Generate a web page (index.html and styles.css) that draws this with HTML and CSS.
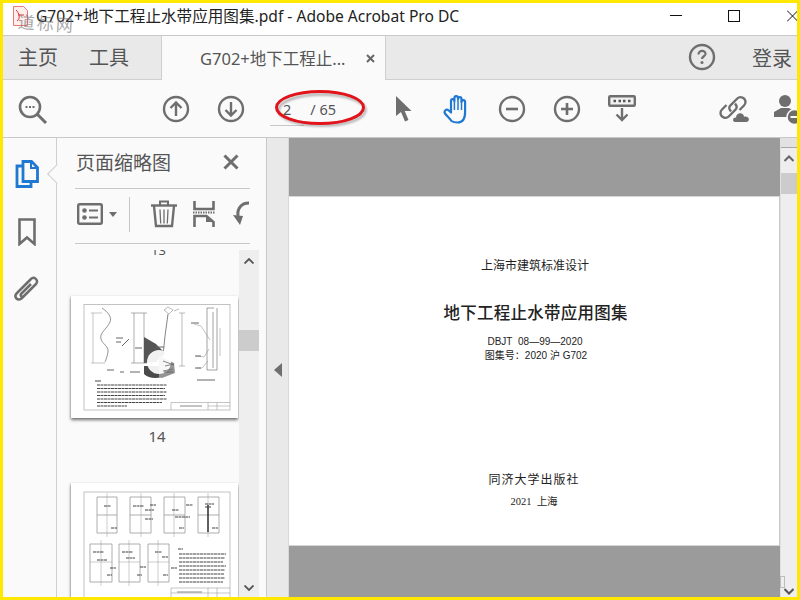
FILE: index.html
```html
<!DOCTYPE html>
<html lang="zh">
<head>
<meta charset="utf-8">
<title>G702 - Adobe Acrobat Pro DC</title>
<link rel="stylesheet" href="styles.css">
</head>
<body>
<div class="window">
  <header class="titlebar">
    <span class="title">G702+地下工程止水带应用图集.pdf - Adobe Acrobat Pro DC</span>
    <svg class="win-min" width="12" height="1" viewBox="0 0 12 1"><path d="M0 .5h12" stroke="#111"/></svg>
    <svg class="win-max" width="12" height="12" viewBox="0 0 12 12"><rect x=".5" y=".5" width="11" height="11" fill="none" stroke="#111"/></svg>
    <svg class="win-close" width="10" height="12" viewBox="0 0 10 12"><path d="M0 .5l11 11M11 .5L0 11.500" stroke="#111" fill="none"/></svg>
  </header>

  <nav class="tabs">
    <span class="tab-link">主页</span>
    <span class="tab-link tab-tools">工具</span>
    <div class="doc-tab">
      <span class="doc-tab-name">G702+地下工程止...</span>
      <svg width="9" height="9" viewBox="0 0 9 9"><path d="M1 1l7 7M8 1L1 8" stroke="#666" stroke-width="2"/></svg>
    </div>
    <svg class="help" width="28" height="28" viewBox="0 0 28 28"><circle cx="14" cy="14" r="12" fill="none" stroke="#6e6e6e" stroke-width="2.400"/><path d="M10.500 11.500c0-5 7.500-4.500 7-.3-.3 2-3.500 2.300-3.500 4.800" fill="none" stroke="#6e6e6e" stroke-width="2.200"/><circle cx="14" cy="19.500" r="1.500" fill="#6e6e6e"/></svg>
    <span class="login">登录</span>
  </nav>

  <div class="toolbar">
    <svg class="tool tool-search" width="30" height="30" viewBox="0 0 30 30"><circle cx="12" cy="12" r="10" fill="none" stroke="#6e6e6e" stroke-width="2.600"/><path d="M19 19l9 9" stroke="#6e6e6e" stroke-width="3"/><path d="M7.500 12h2M11 12h2M14.500 12h2" stroke="#6e6e6e" stroke-width="2"/></svg>
    <svg class="tool tool-up" width="28" height="28" viewBox="0 0 28 28"><circle cx="14" cy="14" r="12" fill="none" stroke="#6e6e6e" stroke-width="2.400"/><path d="M14 21V8M8.500 13L14 7.500l5.500 5.500" fill="none" stroke="#6e6e6e" stroke-width="2.400"/></svg>
    <svg class="tool tool-next" width="28" height="28" viewBox="0 0 28 28"><circle cx="14" cy="14" r="12" fill="none" stroke="#6e6e6e" stroke-width="2.400"/><path d="M14 7v13M8.500 15l5.500 5.500 5.500-5.500" fill="none" stroke="#6e6e6e" stroke-width="2.400"/></svg>
    <div class="pager">
      <span class="page-input">2</span>
      <span class="page-total">/ 65</span>
    </div>
    <span class="tool-sep"></span>
    <svg class="tool tool-arrow" width="16" height="26" viewBox="0 0 16 26"><path d="M0 0v20l5-4 4 9.500 3.500-1.500-3.800-9H15.500z" fill="#6e6e6e"/></svg>
    <svg class="tool tool-hand" width="28" height="30" viewBox="0 0 28 30"><path d="M8.500 27C6.500 24 3.500 21.500 2 19.500c-1.500-2.500 1.500-5 3.500-3.200L8 18.500V7c0-2.400 3.400-2.400 3.400 0V4c0-2.600 3.600-2.600 3.600 0v1c0-2.400 3.500-2.400 3.500 0v3c0-2.400 3.600-2.400 3.600 0v10c0 5-1.500 10.500-7.500 10.500-3 0-4.600-.300-6.100-1.500z" fill="none" stroke="#1f78d1" stroke-width="2.200" stroke-linejoin="round"/><path d="M11.400 7v9M15 5v11M18.500 6v10" stroke="#1f78d1" stroke-width="1.500"/></svg>
    <svg class="tool tool-minus" width="28" height="28" viewBox="0 0 28 28"><circle cx="14" cy="14" r="12" fill="none" stroke="#6e6e6e" stroke-width="2.400"/><path d="M8 14h12" stroke="#6e6e6e" stroke-width="2.600"/></svg>
    <svg class="tool tool-plus" width="28" height="28" viewBox="0 0 28 28"><circle cx="14" cy="14" r="12" fill="none" stroke="#6e6e6e" stroke-width="2.400"/><path d="M8 14h12M14 8v12" stroke="#6e6e6e" stroke-width="2.600"/></svg>
    <svg class="tool tool-fit" width="28" height="27" viewBox="0 0 28 27"><rect x="1.200" y="1.200" width="25.600" height="9.600" rx="1" fill="#f1f1f1" stroke="#6e6e6e" stroke-width="2.400"/><path d="M5.500 6h2.500M10.500 6H13M15 6h2.500M20 6h2.500" stroke="#555" stroke-width="2.400"/><path d="M14 13v12M8.500 19.500L14 25l5.500-5.500" fill="none" stroke="#6e6e6e" stroke-width="2.400"/></svg>
    <svg class="tool tool-link" width="32" height="28" viewBox="0 0 32 28"><path d="M12 16.500l-1-1.500c-1-1.500-.6-3.500.5-4.600l6.800-6.900c3-3 8.200-.5 8.200 3.500 0 1.500-.6 2.600-1.500 3.500l-4.500 4.500" fill="none" stroke="#6e6e6e" stroke-width="2.300"/><path d="M16 8.500l1 1.500c1 1.500.6 3.500-.5 4.600l-6.800 6.900c-3 3-8.200.5-8.200-3.500 0-1.500.6-2.600 1.500-3.500l4.500-4.500" fill="none" stroke="#6e6e6e" stroke-width="2.300"/><path d="M16 27.500c-3.500 0-3.500-5.500.5-5.500.5-5 7.500-6 9-1 3-.5 5 1.500 5 3.500 0 2-1.500 3-3 3z" fill="#6e6e6e" stroke="#fafafa" stroke-width="1.200"/></svg>
    <svg class="tool tool-user" width="24" height="30" viewBox="0 0 24 30"><circle cx="11" cy="7" r="6" fill="#6e6e6e"/><path d="M0 23v-5l7-4h8l5 3v6z" fill="#6e6e6e"/><circle cx="20.500" cy="23" r="7.500" fill="#6e6e6e" stroke="#fafafa" stroke-width="1.500"/><path d="M16.500 23h8" stroke="#fafafa" stroke-width="2"/></svg>
  </div>

  <main class="workspace">
    <aside class="rail">
      <span class="rail-notch"></span>
      <svg width="24" height="28" viewBox="0 0 24 28"><path d="M8 6H2v20.500h14V22" fill="none" stroke="#1f78d1" stroke-width="2.800"/><path d="M8 1.500h8.500l6 6V21.500H8z" fill="#fafafa" stroke="#1f78d1" stroke-width="2.800"/><path d="M16 2v6h6" fill="none" stroke="#1f78d1" stroke-width="2"/></svg>
      <svg width="18" height="28" viewBox="0 0 18 28"><path d="M1.500 1.500h15v24.500L9 19.500 1.500 26z" fill="none" stroke="#6e6e6e" stroke-width="2.600"/></svg>
      <svg width="26" height="27" viewBox="0 0 26 27"><path d="M22 8L8 22c-4 4-9-1-5-5L17 3c3-3 8 1 5 5L10 20c-2 2-4.500-.5-2.500-2.500L17 8" fill="none" stroke="#6e6e6e" stroke-width="2.500"/></svg>
    </aside>

    <section class="panel">
      <div class="panel-head">
        <span class="panel-title">页面缩略图</span>
        <svg width="16" height="16" viewBox="0 0 16 16"><path d="M1.500 1.500l13 13M14.500 1.500l-13 13" stroke="#6e6e6e" stroke-width="3"/></svg>
      </div>
      <div class="panel-tools">
        <svg width="26" height="22" viewBox="0 0 26 22"><rect x="1.200" y="1.200" width="23.600" height="19.600" rx="1.500" fill="none" stroke="#6e6e6e" stroke-width="2.400"/><circle cx="7.500" cy="7.500" r="2.300" fill="#6e6e6e"/><circle cx="7.500" cy="14.500" r="2.300" fill="#6e6e6e"/><path d="M12 7.500h9M12 14.500h9" stroke="#6e6e6e" stroke-width="2"/></svg>
        <svg class="caret" width="8" height="5" viewBox="0 0 8 5"><path d="M0 0h8L4 5z" fill="#6e6e6e"/></svg>
        <span class="panel-sep"></span>
        <svg class="trash" width="26" height="28" viewBox="0 0 26 28"><path d="M0 5.500h26" stroke="#6e6e6e" stroke-width="2.400"/><path d="M9 5V1.500h8V5" fill="none" stroke="#6e6e6e" stroke-width="2"/><path d="M3 6l2 20h16l2-20" fill="none" stroke="#6e6e6e" stroke-width="2.400"/><path d="M9 9.500l.7 14M13 9.500v14M17 9.500l-.7 14" stroke="#6e6e6e" stroke-width="1.300"/></svg>
        <svg class="extract" width="22" height="26" viewBox="0 0 22 26"><path d="M1.500 0v8h19V0" fill="none" stroke="#6e6e6e" stroke-width="2.600"/><path d="M0 11.500h22" stroke="#6e6e6e" stroke-width="2" stroke-dasharray="1.500 1"/><path d="M1.500 26V15h12l7 6v5" fill="none" stroke="#6e6e6e" stroke-width="2.600"/><path d="M13 15v6h7z" fill="#6e6e6e"/></svg>
        <svg class="rotate" width="17" height="26" viewBox="0 0 17 26"><path d="M16 2C8 2 4 8 5 15" fill="none" stroke="#6e6e6e" stroke-width="3"/><path d="M0 14l10 1-3 9z" fill="#6e6e6e"/></svg>
      </div>
      <div class="thumbs">
        <div class="thumb-list">
          <span class="thumb-cut">13</span>
          <figure class="thumb">
            <svg class="sheet" width="167" height="122" viewBox="0 0 167 122">
              <g class="sketch">
                <rect x="13" y="8.500" width="146" height="105.500" fill="none" stroke="#aaa" stroke-width=".7"/>
                <path d="M31 12c6 4 10 9 8 14-3 7-11 11-9 17 1 5 8 7 7 13-1 5-2 8-3 10" fill="none" stroke="#666" stroke-width=".7"/>
                <path d="M22 17v50M20 17h11M20 67h14" fill="none" stroke="#888" stroke-width=".5"/>
                <path d="M63 17v50M73 17v50M60 17h16M60 67h16" fill="none" stroke="#777" stroke-width=".6"/>
                <path d="M97 18l-3 22-2 20" fill="none" stroke="#666" stroke-width=".8"/>
                <path d="M93 14l4-3 5 3-4 4zM103 15l5-2M111 17v53M108 17h6M108 70h6" fill="none" stroke="#777" stroke-width=".5"/>
                <path d="M136 12v62M146 12v62h-10M142 16v56M136 12h7" fill="none" stroke="#666" stroke-width=".6"/>
                <path d="M123 28l7 2 9 14M125 60l8 1 5-8M126 72h5l6-7M149 32v28" fill="none" stroke="#888" stroke-width=".5"/>
                <path d="M73 41l12 7 9 9-9 9-12 1z" fill="#555"/>
                <path d="M73 70h16l2 11c-7 2-14 1-18-3z" fill="#4a4a4a"/>
                <path d="M88 60l15 7 1 10-13 5-3-1z" fill="#959595"/>
                <ellipse cx="88" cy="66" rx="12" ry="12" fill="#fff" fill-opacity=".92"/>
                <path d="M92 65l11 4M94 70l9-2M92 75l10-2" stroke="#666" stroke-width=".8"/>
                <path d="M45 42h7M45 46h5M51 50l7-7M64 52h7M85 51h8M59 76h10M93 76h9M49 76h4M36 74h7" stroke="#666" stroke-width="1"/>
                <path d="M120 27h8M124 60h6M124 72h6M126 84h18" stroke="#666" stroke-width="1"/>
                <path d="M24 85h6" stroke="#666" stroke-width="1.200"/>
                <path class="copy" d="M26 89h70M26 92.500h68M26 96h70M26 99.500h68M26 103h70M26 106.500h65M26 110h30"/>
                <path d="M100 106.500h59M137 106.500v7.500M146 106.500v7.500M100 106.500v7.500M137 110h22" fill="none" stroke="#888" stroke-width=".5"/>
                <path d="M109 110h22" stroke="#888" stroke-width="1"/>
              </g>
            </svg>
            <figcaption class="thumb-label">14</figcaption>
          </figure>
          <figure class="thumb">
            <svg class="sheet" width="167" height="114" viewBox="0 0 167 114">
              <g class="sketch">
                <rect x="13" y="9" width="146" height="110" fill="none" stroke="#aaa" stroke-width=".7"/>
                <path d="M26 14h20v36H26zM26 32h20M59 14h21v36H59zM59 32h21M93 14h21v36H93zM93 32h21M127 14h21v36h-21zM127 32h21" fill="none" stroke="#999" stroke-width=".8"/>
                <path d="M36 10v44M70 10v44M103 10v44M137 10v44" stroke="#999" stroke-width=".5"/>
                <path d="M137 22v27" stroke="#333" stroke-width="1.500"/>
                <path class="copy" d="M33 23h7M62 23h11M79 22h6M74 27h9M101 27h7M104 34h15M115 22h7M134 21h9M134 24h6M40 45h6M74 36h8M108 45h5M141 45h6"/>
                <path d="M19 61h22v38H19zM48 61h21v38H48zM77 61h21v38H77z" fill="none" stroke="#999" stroke-width=".8"/>
                <path d="M30 57v46M58 57v46M87 57v46M19 79h22M48 79h21M77 79h21" stroke="#999" stroke-width=".5"/>
                <path class="copy" d="M22 69h11M26 77h10M39 85h6M51 69h11M55 75h9M69 84h6M84 69h7M91 74h6M100 85h6M36 92h5M66 92h5M92 92h5"/>
                <path class="copy" d="M107 66h5M108 71h47M108 75h46M108 79h44M108 83h47M108 87h46M108 91h45M108 95h46M108 99h44"/>
                <path d="M100 105h59M100 105v9M137 105v9M146 105v9M100 110h59" fill="none" stroke="#888" stroke-width=".5"/>
                <path d="M106 109h25" stroke="#888" stroke-width="1"/>
              </g>
            </svg>
          </figure>
        </div>
        <div class="mini-scroll">
          <svg width="10" height="6" viewBox="0 0 10 6"><path d="M.5 5.500L5 1l4.500 4.500" fill="none" stroke="#555" stroke-width="1.800"/></svg>
          <span class="mini-thumb"></span>
          <svg class="mini-down" width="10" height="6" viewBox="0 0 10 6"><path d="M.5.500L5 5 9.500.5" fill="none" stroke="#555" stroke-width="1.800"/></svg>
        </div>
      </div>
    </section>

    <div class="gutter">
      <svg width="8" height="14" viewBox="0 0 8 14"><path d="M8 0v14L0 7z" fill="#6e6e6e"/></svg>
    </div>

    <section class="doc">
      <div class="band band-top"></div>
      <article class="page">
        <p class="series">上海市建筑标准设计</p>
        <h1 class="doc-title">地下工程止水带应用图集</h1>
        <p class="code">DBJT&nbsp; 08—99—2020</p>
        <p class="code code-2">图集号：2020 沪 G702</p>
        <p class="press">同济大学出版社</p>
        <p class="year">2021&nbsp; 上海</p>
      </article>
      <div class="band band-bottom"><span class="ghost-mark"></span></div>
    </section>

    <div class="doc-scroll">
      <span class="scroll-cap"></span>
      <svg class="scroll-up" width="10" height="7" viewBox="0 0 10 7"><path d="M.5 6L5 1.500 9.500 6" fill="none" stroke="#666" stroke-width="2"/></svg>
      <span class="scroll-thumb"></span>
      <svg class="scroll-down" width="10" height="7" viewBox="0 0 10 7"><path d="M.5 1L5 5.500 9.500 1" fill="none" stroke="#555" stroke-width="2"/></svg>
    </div>
  </main>

  <div class="watermark">
    <svg width="15" height="20" viewBox="0 0 15 20"><path d="M.5.500h10l4 4v15H.5z" fill="#fdeeee" stroke="#e77" /><path d="M3 4c3 3 5 8 1 11M5 9h6" fill="none" stroke="#d33"/></svg>
    <span class="wm-text">道标网</span>
  </div>
  <svg class="page-ring" width="94" height="44" viewBox="0 0 94 44">
    <ellipse class="ring-shadow" cx="48" cy="22" rx="43.500" ry="15.500"/>
    <ellipse class="ring-line" cx="46" cy="19.500" rx="43.500" ry="16"/>
  </svg>
</div>
</body>
</html>
```

FILE: styles.css
```css
* { box-sizing: border-box; }
html, body { margin: 0; padding: 0; }
body {
  width: 800px;
  height: 600px;
  overflow: hidden;
  font-family: "Noto Sans", "Noto Sans CJK SC", sans-serif;
}
svg { display: block; flex: none; }
p, h1, figure { margin: 0; }

.window {
  position: relative;
  width: 800px;
  height: 600px;
  border: 3px solid #ffe800;
  background: #fafafa;
  display: flex;
  flex-direction: column;
  overflow: hidden;
}

.titlebar {
  height: 33px;
  flex: none;
  display: flex;
  align-items: center;
  background: #fff;
  border-bottom: 1px solid #c8c8c8;
  padding-left: 33px;
  padding-bottom: 7px;
}
.title { font-size: 15.600px; color: #222; white-space: nowrap; width: 634px; }
.win-min { margin-right: 46px; }
.win-max { margin-right: 47px; }

.tabs {
  height: 44px;
  flex: none;
  display: flex;
  align-items: center;
  background: #e9e9e9;
  border-bottom: 1px solid #cfcfcf;
  padding-left: 15px;
  font-size: 20px;
  color: #555;
}
.tab-link { width: 71px; line-height: 44px; }
.tab-tools { width: 72px; }
.doc-tab {
  align-self: stretch;
  width: 225px;
  margin-bottom: -1px;
  background: #fafafa;
  border-left: 1px solid #cfcfcf;
  border-right: 1px solid #cfcfcf;
  display: flex;
  align-items: center;
  padding-left: 38px;
  gap: 18px;
}
.doc-tab-name { font-size: 16.500px; color: #555; white-space: nowrap; width: 148px; }
.help { margin-left: 302px; margin-bottom: 2px; }
.login { margin-left: 36px; white-space: nowrap; font-size: 20px; }

.toolbar {
  height: 58px;
  flex: none;
  display: flex;
  align-items: center;
  background: #fafafa;
  border-bottom: 1px solid #c8c8c8;
  padding-left: 15px;
}
.tool-search { margin-top: 2px; }
.tool-up { margin-left: 114px; }
.tool-next { margin-left: 27px; }
.pager {
  margin-left: 25px;
  width: 66px;
  display: flex;
  align-items: center;
  font-size: 14.500px;
  color: #555;
  height: 34px;
}
.page-input {
  width: 36px;
  height: 35px;
  line-height: 36px;
  padding-left: 13px;
  border-bottom: 1px solid #c8c8c8;
  margin-right: 6px;
}
.page-total { white-space: nowrap; line-height: 36px; }
.tool-sep { width: 1px; height: 33px; background: #c8c8c8; margin-left: 26px; }
.tool-arrow { margin-left: 34px; }
.tool-hand { margin-left: 31px; }
.tool-minus { margin-left: 27px; }
.tool-plus { margin-left: 27px; }
.tool-fit { margin-left: 27px; }
.tool-link { margin-left: 83px; }
.tool-user { margin-left: 23px; }

.workspace {
  flex: 1;
  min-height: 0;
  display: flex;
  position: relative;
}

.rail {
  position: relative;
  width: 54px;
  flex: none;
  background: #fafafa;
  border-right: 1px solid #cfcfcf;
  display: flex;
  flex-direction: column;
  align-items: center;
  padding: 22px 5px 0 0;
  gap: 30px;
}
.rail-notch {
  position: absolute;
  right: -8px;
  top: 29px;
  width: 14px;
  height: 14px;
  background: #fafafa;
  border-left: 1px solid #cfcfcf;
  border-bottom: 1px solid #cfcfcf;
  transform: rotate(45deg);
}

.panel {
  width: 209px;
  flex: none;
  background: #fafafa;
  display: flex;
  flex-direction: column;
  padding-left: 18px;
}
.panel-head {
  height: 51px;
  width: 175px;
  flex: none;
  display: flex;
  align-items: center;
  justify-content: space-between;
  border-bottom: 1px solid #c8c8c8;
  padding: 0 11px 3px 1px;
}
.panel-title { font-size: 19px; color: #555; white-space: nowrap; }
.panel-tools {
  height: 55px;
  width: 175px;
  flex: none;
  display: flex;
  align-items: center;
  border-bottom: 1px solid #c8c8c8;
  overflow: hidden;
  padding: 0 0 4px 2px;
}
.caret { margin-left: 6px; }
.panel-sep { width: 1px; height: 35px; background: #c8c8c8; margin-left: 12px; }
.trash { margin-left: 21px; }
.extract { margin-left: 16px; }
.rotate { margin-left: 18px; }

.thumbs {
  flex: 1;
  min-height: 0;
  margin-left: -18px;
  padding-top: 6px;
  display: flex;
  width: 202px;
}
.thumb-list {
  width: 182px;
  overflow: hidden;
  padding-left: 14px;
  background: #fafafa;
}
.thumb-cut {
  display: block;
  height: 54px;
  margin-top: -8px;
  width: 167px;
  padding-left: 8px;
  text-align: center;
  font-size: 13px;
  line-height: 16px;
  color: #555;
}
.thumb { width: 168px; }
.sheet {
  background: #fff;
  box-shadow: 0 2px 3px rgba(0,0,0,.55), -1px 0 1px rgba(0,0,0,.08);
}
.sketch { filter: blur(.4px); }
.copy { fill: none; stroke: #444; stroke-width: 1.200; stroke-dasharray: 3 .5; }
.thumb-label {
  height: 65px;
  padding: 8px 0 0 4px;
  text-align: center;
  font-size: 15px;
  line-height: 20px;
  color: #555;
}
.mini-scroll {
  width: 20px;
  height: 100%;
  background: #eeeeee;
  display: flex;
  flex-direction: column;
  align-items: center;
  padding-top: 8px;
}
.mini-thumb { width: 20px; height: 21px; background: #cccccc; margin-top: 66px; }
.mini-down { margin-top: 234px; }

.gutter {
  width: 23px;
  flex: none;
  background: #e9e9e9;
  border-left: 1px solid #c8c8c8;
  border-right: 1px solid #d8d8d8;
  display: flex;
  align-items: flex-start;
  justify-content: center;
  padding-top: 225px;
}

.doc {
  width: 491px;
  flex: none;
  display: flex;
  flex-direction: column;
  background: #9b9b9b;
}
.band { background: #9b9b9b; flex: none; }
.band-top { height: 58px; }
.band-bottom { flex: 1; position: relative; }
.ghost-mark {
  position: absolute;
  right: -5px;
  bottom: 9px;
  width: 5px;
  height: 12px;
  border: 1px solid #bdbdbd;
}
.page {
  height: 350px;
  flex: none;
  background: #fff;
  border-top: 1px solid #d6d6d6;
  border-bottom: 1px solid #d6d6d6;
  border-right: 1px solid #c8c8c8;
  display: flex;
  flex-direction: column;
  align-items: center;
  padding-top: 60px;
  color: #222;
  font-family: "Noto Sans CJK SC", sans-serif;
}
.series { font-size: 12px; line-height: 16px; margin-left: 2px; }
.doc-title { font-size: 16.500px; line-height: 22px; font-weight: 500; margin: 28px 0 0 3px; letter-spacing: .25px; }
.code { font-size: 10px; line-height: 14px; margin: 12px 0 0 2px; font-family: "Liberation Sans", "Noto Sans CJK SC", sans-serif; }
.code-2 { margin: 0 0 0 4px; }
.press { font-size: 12px; line-height: 16px; margin-top: 108px; letter-spacing: 1px; font-weight: 400; }
.year { font-size: 10.500px; line-height: 14px; margin-top: 8px; font-family: "Liberation Serif", "Noto Sans CJK SC", serif; }

.doc-scroll {
  flex: 1;
  background: #eeeeee;
  border-left: 1px solid #e0e0e0;
  display: flex;
  flex-direction: column;
  align-items: center;
}
.scroll-cap { width: 100%; height: 10px; background: #e2e2e2; border-bottom: 1px solid #a8a8a8; flex: none; }
.scroll-up { margin-top: 7px; }
.scroll-thumb { width: 100%; height: 21px; background: #cccccc; margin-top: 11px; flex: none; }
.scroll-down { margin-top: auto; margin-bottom: 2px; }

.watermark {
  position: absolute;
  left: 10px;
  top: 3px;
  display: flex;
  pointer-events: none;
}
.wm-text {
  font-family: "Noto Sans CJK SC", sans-serif;
  font-size: 17px;
  line-height: 20px;
  letter-spacing: 2px;
  margin: 5px 0 0 -10px;
  color: rgba(110,110,110,.6);
  white-space: nowrap;
  transform: rotate(4deg);
  transform-origin: left center;
}

.page-ring {
  position: absolute;
  left: 271px;
  top: 85px;
}
.ring-shadow { fill: none; stroke: rgba(0,0,0,.3); stroke-width: 2.500; filter: blur(1.200px); }
.ring-line { fill: none; stroke: #e0141a; stroke-width: 3; }
```
